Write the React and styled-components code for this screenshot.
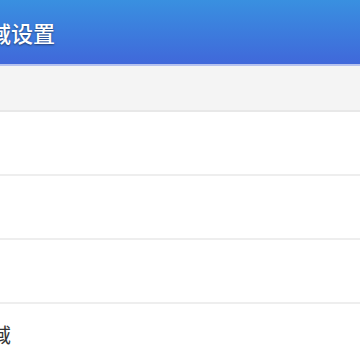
import React from "react"
import styled, { createGlobalStyle } from "styled-components"

const GlobalStyle = createGlobalStyle`
  html, body {
    margin: 0;
    padding: 0;
    background: #ffffff;
    font-family: "Noto Sans CJK SC", "Noto Sans", sans-serif;
  }
`

const Page = styled.div`
  width: 360px;
  height: 360px;
  overflow: hidden;
  display: flex;
  flex-direction: column;
`

const Header = styled.header`
  height: 64px;
  flex-shrink: 0;
  display: flex;
  align-items: center;
  background: linear-gradient(to bottom, #3990e0, #4068da);
  border-bottom: 2px solid #b6c2ee;
`

const Title = styled.h1`
  margin: 0 0 0 -11px;
  font-size: 22px;
  font-weight: 500;
  color: #ffffff;
  text-shadow: 0 1px 2px rgba(0, 0, 0, 0.5);
  line-height: 1;
`

const Band = styled.div`
  height: 44px;
  flex-shrink: 0;
  background: #f4f4f4;
  border-bottom: 2px solid #e8e8e8;
`

const Row = styled.div`
  height: 62px;
  flex-shrink: 0;
  display: flex;
  align-items: center;
  background: #ffffff;
  border-bottom: ${(p) => (p.$last ? "none" : "2px solid #eeeeee")};
`

const Label = styled.span`
  margin-left: -9px;
  font-size: 20px;
  color: #333333;
  line-height: 1;
`

export default function App() {
  return (
    <Page>
      <GlobalStyle />
      <Header>
        <Title>域设置</Title>
      </Header>
      <Band />
      <Row />
      <Row />
      <Row />
      <Row $last>
        <Label>域</Label>
      </Row>
    </Page>
  )
}
